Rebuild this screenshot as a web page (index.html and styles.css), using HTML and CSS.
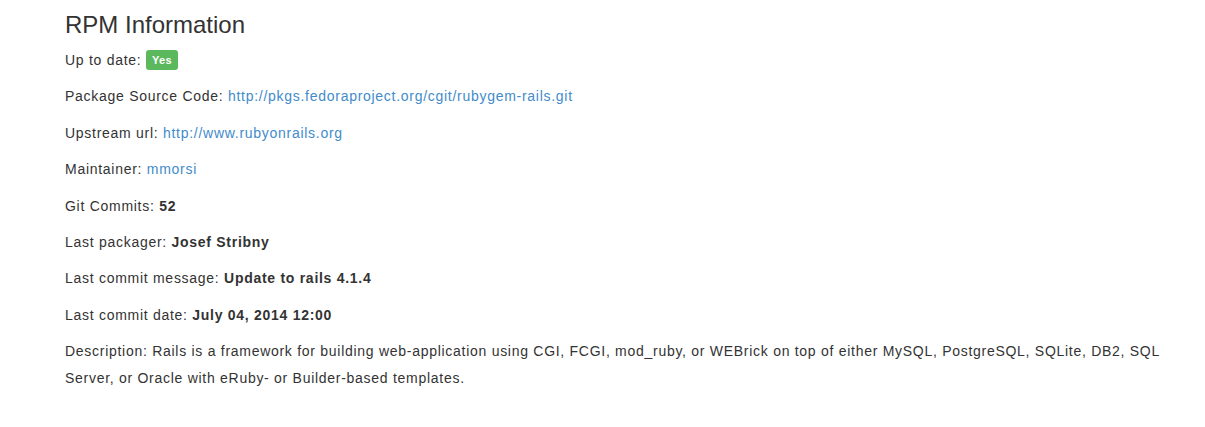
FILE: index.html
```html
<!DOCTYPE html>
<html>
<head>
<meta charset="utf-8">
<link rel="stylesheet" href="styles.css">
</head>
<body>
<div class="content">
  <h3 class="title">RPM Information</h3>
  <p class="row">Up to date: <span class="label-yes">Yes</span></p>
  <p class="row">Package Source Code: <a href="#">http://pkgs.fedoraproject.org/cgit/rubygem-rails.git</a></p>
  <p class="row">Upstream url: <a href="#">http://www.rubyonrails.org</a></p>
  <p class="row">Maintainer: <a href="#">mmorsi</a></p>
  <p class="row">Git Commits: <b>52</b></p>
  <p class="row">Last packager: <b>Josef Stribny</b></p>
  <p class="row">Last commit message: <b>Update to rails 4.1.4</b></p>
  <p class="row">Last commit date: <b>July 04, 2014 12:00</b></p>
  <p class="row">Description: Rails is a framework for building web-application using CGI, FCGI, mod_ruby, or WEBrick on top of either MySQL, PostgreSQL, SQLite, DB2, SQL Server, or Oracle with eRuby- or Builder-based templates.</p>
</div>
</body>
</html>
```
FILE: styles.css
```css
html, body {
  margin: 0;
  padding: 0;
  background: #ffffff;
}
body {
  font-family: "Liberation Sans", Arial, sans-serif;
  font-size: 14px;
  color: #333333;
}
.content {
  padding: 10px 0 0 65px;
  width: 1110px;
}
.title {
  font-size: 24px;
  font-weight: 500;
  line-height: 30px;
  margin: 0 0 7px 0;
  color: #333333;
}
.row {
  margin: 0 0 10px 0;
  line-height: 26.4px;
  letter-spacing: 0.72px;
}
a {
  color: #428bca;
  text-decoration: none;
}
b {
  font-weight: bold;
}
.label-yes {
  display: inline-block;
  background: #5cb85c;
  color: #ffffff;
  font-size: 11px;
  font-weight: bold;
  line-height: 12px;
  padding: 4px 6px;
  border-radius: 3px;
  vertical-align: 1px;
  letter-spacing: 0.3px;
}
```
